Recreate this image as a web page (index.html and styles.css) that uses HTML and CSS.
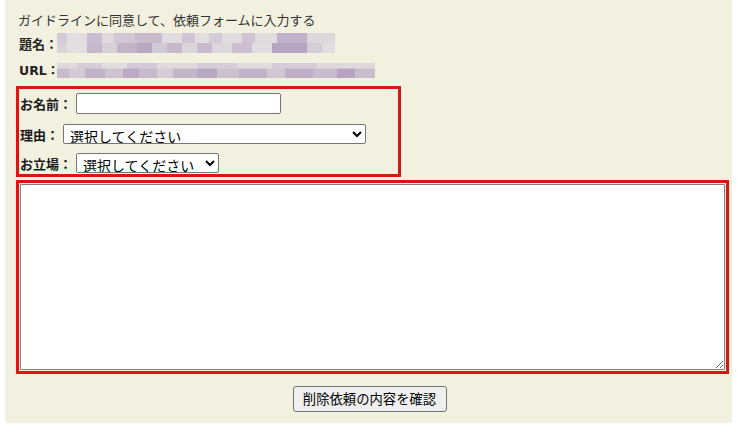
FILE: index.html
```html
<!DOCTYPE html>
<html lang="ja">
<head>
<meta charset="utf-8">
<title>削除依頼フォーム</title>
<link rel="stylesheet" href="styles.css">
</head>
<body>
<div class="panel">
  <p class="intro">ガイドラインに同意して、依頼フォームに入力する</p>
  <div class="meta-row title-row"><span class="label">題名：</span><span class="blur blur-title"></span></div>
  <div class="meta-row url-row"><span class="label">URL：</span><span class="blur blur-url"></span></div>
  <div class="box fields">
    <div class="field f-name"><label class="flabel" for="name">お名前：</label><input id="name" class="text-input" type="text"></div>
    <div class="field f-reason"><label class="flabel" for="reason">理由：</label><select id="reason" class="sel sel-reason"><option>選択してください</option></select></div>
    <div class="field f-role"><label class="flabel" for="role">お立場：</label><select id="role" class="sel sel-role"><option>選択してください</option></select></div>
  </div>
  <div class="box text-box"><textarea class="body-text"></textarea></div>
  <div class="actions"><button class="confirm" type="button">削除依頼の内容を確認</button></div>
</div>
</body>
</html>
```
FILE: styles.css
```css
html, body {
  margin: 0;
  padding: 0;
  background: #ffffff;
}
body {
  font-family: "Noto Sans CJK JP", "Liberation Sans", sans-serif;
  font-size: 13px;
  color: #222;
}
.panel {
  margin-left: 5px;
  width: 727px;
  box-sizing: border-box;
  background: #f2f0df;
  padding: 11px 3px 11px 11px;
}
.intro {
  margin: 0;
  padding-left: 2px;
  height: 18px;
  line-height: 18px;
  color: #333;
}
.meta-row {
  display: flex;
  align-items: center;
  padding-left: 3px;
}
.title-row {
  margin-top: 4px;
  height: 20px;
}
.url-row {
  margin-top: 9px;
  height: 17px;
}
.label {
  width: 38px;
  white-space: nowrap;
  font-weight: bold;
  line-height: 17px;
  font-family: "DejaVu Sans", "Noto Sans CJK JP", sans-serif;
}
.title-row .label {
  font-family: "Noto Sans CJK JP", sans-serif;
}
.url-row .label {
  font-size: 12.5px;
}
.blur {
  display: block;
}
.blur-title {
  width: 278px;
  height: 20px;
  margin-top: -1px;
  background:
    linear-gradient(to right,
      #d5cbd8 0 10px, #e2dddf 10px 30px, #cbbdd1 30px 45px, #e0dadd 45px 57px,
      #d3c7d6 57px 78px, #c9bace 78px 105px, #e0dbdd 105px 125px, #d1c5d5 125px 138px,
      #e3dede 138px 152px, #d6ccd9 152px 165px, #e1dcdd 165px 185px, #cfc3d4 185px 198px,
      #e1dcdd 198px 220px, #c2b1cb 220px 250px, #ddd6da 250px 278px) top left / 100% 50% no-repeat,
    linear-gradient(to right,
      #dad3d8 0 10px, #e4dfdf 10px 30px, #c6b7cc 30px 45px, #d8cfd7 45px 60px,
      #c4b4ca 60px 80px, #b9a7c2 80px 95px, #d3c9d5 95px 110px, #c7b8cc 110px 125px,
      #dbd4d8 125px 140px, #c9bacd 140px 155px, #ddd7da 155px 175px, #cdbfd1 175px 195px,
      #e2dddf 195px 215px, #b8a5c3 215px 250px, #d6ced7 250px 265px, #e2dddf 265px 278px) bottom left / 100% 50% no-repeat;
}
.blur-url {
  width: 318px;
  height: 16px;
  background:
    linear-gradient(to right,
      #dfd9dd 0 20px, #d6cdd9 20px 45px, #e1dcde 45px 70px, #d3c9d6 70px 100px,
      #dfd9dc 100px 140px, #d6cdd9 140px 180px, #e1dcde 180px 215px, #d5ccd8 215px 260px,
      #dfd9dc 260px 318px) top left / 100% 35% no-repeat,
    linear-gradient(to right,
      #c9bbcf 0 12px, #d4c9d7 12px 28px, #c3b3ca 28px 48px, #cec2d3 48px 66px,
      #bba9c5 66px 82px, #c8b9cd 82px 100px, #d6ccd8 100px 116px, #c4b5cb 116px 140px,
      #b9a7c3 140px 160px, #cdc0d1 160px 182px, #c2b2c9 182px 210px, #d2c6d5 210px 228px,
      #c0aec8 228px 256px, #c9bbcf 256px 280px, #b7a4c2 280px 298px, #cbbdd0 298px 318px) bottom left / 100% 65% no-repeat;
}
.box {
  border: 3px solid #e01212;
  box-sizing: border-box;
}
.fields {
  width: 385px;
  margin-top: 7px;
  padding: 4px 0 1px 1px;
}
.field {
  display: flex;
  align-items: center;
}
.f-name {
  height: 21px;
  margin-bottom: 10px;
}
.f-reason {
  height: 20px;
  margin-bottom: 9px;
}
.f-role {
  height: 20px;
}
.flabel {
  font-weight: bold;
  margin-right: 4px;
  line-height: 17px;
  color: #1a1a1a;
}
.text-input {
  width: 205px;
  height: 21px;
  box-sizing: border-box;
  border: 1px solid #767676;
  border-radius: 2px;
  background: #fff;
  margin: 0;
  padding: 1px 2px;
  font: 13px "Noto Sans CJK JP", sans-serif;
}
.sel {
  height: 20px;
  box-sizing: border-box;
  margin: 0;
  border: 1px solid #767676;
  border-radius: 2px;
  background: #fff;
  color: #000;
  font-family: "Noto Sans CJK JP", sans-serif;
  font-size: 14px;
  padding: 0 2px;
}
.sel-reason {
  width: 303px;
}
.sel-role {
  width: 143px;
}
.text-box {
  margin-top: 3px;
  padding: 1px;
}
.body-text {
  display: block;
  width: 100%;
  height: 186px;
  box-sizing: border-box;
  margin: 0;
  border: 1px solid #8a7a7c;
  border-radius: 1px;
  background: #fff;
  resize: both;
  font: 13px "Noto Sans CJK JP", sans-serif;
}
.actions {
  display: flex;
  justify-content: center;
  margin-top: 12px;
}
.confirm {
  width: 154px;
  height: 26px;
  box-sizing: border-box;
  border: 1px solid #767676;
  border-radius: 3px;
  background: #efefef;
  color: #000;
  font: 13.33px/16px "Noto Sans CJK JP", sans-serif;
  padding: 0 4px;
  margin-left: -6px;
}
```
